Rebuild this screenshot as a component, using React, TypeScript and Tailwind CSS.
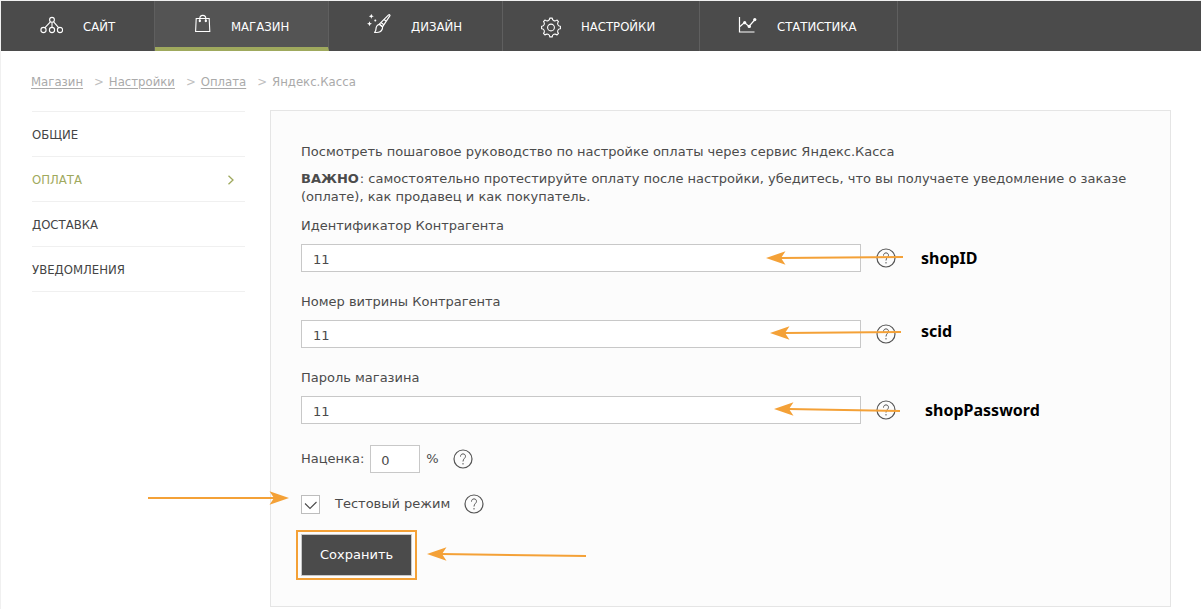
import { useState } from "react";
import type { ReactNode } from "react";

const SiteIcon = () => (
  <svg width="24" height="24" viewBox="0 0 24 24" fill="none" stroke="currentColor" strokeWidth="1.1" aria-hidden="true">
    <circle cx="13" cy="5.8" r="2.4" />
    <circle cx="4.500" cy="16" r="2.6" />
    <circle cx="13" cy="16" r="2.6" />
    <circle cx="21" cy="16" r="2.6" />
    <path d="M11.400 7.800 6 13.700M13 8.200v5.200M14.600 7.800l5 5.900" />
  </svg>
);

const BagIcon = () => (
  <svg width="16" height="24" viewBox="0 0 16 24" fill="none" stroke="currentColor" strokeWidth="1.1" aria-hidden="true">
    <path d="M1.200 4.500h13l.6 13H.6z" />
    <path d="M4.800 7.200V4.600c0-2 1-3.200 3-3.200s3 1.200 3 3.200v2.600" />
    <circle cx="4.800" cy="7" r=".6" fill="currentColor" />
    <circle cx="10.800" cy="7" r=".6" fill="currentColor" />
  </svg>
);

const BrushIcon = () => (
  <svg width="24" height="24" viewBox="0 0 24 24" fill="none" stroke="currentColor" strokeWidth="1.2" strokeLinejoin="round" aria-hidden="true">
    <path d="M12.300 10.200 21.600.900c.9-.6 1.700.1 1.200 1L15.500 12.800z" />
    <path d="m14 8.500 2.800 2.300M17 5.500l2 1.500" />
    <path d="M12.300 10.200c-2.300.9-3.300 2.700-3.300 4.600 0 1.500-.5 2.800-1.400 3.600 3.400.4 6.400-.3 7.500-2.800.4-1 .5-1.900.4-2.800z" />
    <path d="m4.300-.2.700 1.800 1.800.7-1.800.7-.7 1.800-.7-1.800-1.800-.7 1.800-.7z" fill="currentColor" stroke="none" />
    <path d="m2.500 7.200.7 1.800 1.800.7-1.800.7-.7 1.800-.7-1.800L0 9.700 1.800 9z" fill="currentColor" stroke="none" />
    <circle cx="8.300" cy="6.500" r="1" fill="currentColor" stroke="none" />
  </svg>
);

const GearIcon = () => (
  <svg width="20" height="24" viewBox="0 0 20 24" fill="none" stroke="currentColor" strokeWidth="1.100" strokeLinejoin="round" aria-hidden="true">
    <g transform="translate(10 13.500)">
      <circle r="3.400" />
      <path d="M9.400-1.200V1.200A2.700 2.700 0 0 0 7.500 5.900L5.900 7.500A2.700 2.700 0 0 0 1.200 9.400H-1.200A2.700 2.700 0 0 0-5.900 7.500L-7.500 5.900A2.700 2.700 0 0 0-9.400 1.200V-1.200A2.700 2.700 0 0 0-7.500-5.900L-5.900-7.500A2.700 2.700 0 0 0-1.200-9.400H1.200A2.700 2.700 0 0 0 5.900-7.500L7.500-5.900A2.700 2.700 0 0 0 9.400-1.200z" />
    </g>
  </svg>
);

const ChartIcon = () => (
  <svg width="19" height="24" viewBox="0 0 19 24" fill="none" stroke="currentColor" strokeWidth="1.200" aria-hidden="true">
    <path d="M1.500 3v15h15" />
    <path d="M2 12.500 6.500 8.500l4.500 4L17 5.500" />
    <circle cx="6.700" cy="8.700" r="1.600" fill="currentColor" stroke="none" />
    <circle cx="11.300" cy="12.400" r="1.700" fill="currentColor" stroke="none" />
    <circle cx="16.800" cy="5.600" r="1.600" fill="currentColor" stroke="none" />
  </svg>
);

const menu = [
  { title: "САЙТ", icon: <SiteIcon />, width: "min-w-[154px]" },
  { title: "МАГАЗИН", icon: <BagIcon />, width: "min-w-[174px]", active: true },
  { title: "ДИЗАЙН", icon: <BrushIcon />, width: "min-w-[174px]" },
  { title: "НАСТРОЙКИ", icon: <GearIcon />, width: "min-w-[197px]" },
  { title: "СТАТИСТИКА", icon: <ChartIcon />, width: "min-w-[198px]" },
];

const sections = ["ОБЩИЕ", "ОПЛАТА", "ДОСТАВКА", "УВЕДОМЛЕНИЯ"];

const Header = () => {
  return (
    <nav className="bg-[#4b4b4b] text-white">
      <ul className="flex">
        {menu.map((item) => (
          <li key={item.title} className={item.width}>
            <a
              href="#"
              className={
                item.active
                  ? "flex items-center gap-5 h-[50px] pl-10 pt-1 border-r border-b-4 border-r-[#5f5f5f] border-b-[#9fa95d] bg-[#545454]"
                  : "flex items-center gap-5 h-[50px] pl-[38px] border-r border-[#5f5f5f]"
              }
            >
              {item.icon}
              <span className="pt-px text-[13px] leading-4">{item.title}</span>
            </a>
          </li>
        ))}
      </ul>
    </nav>
  );
};

const Breadcrumbs = () => {
  return (
    <ol className="flex px-[30px] pt-[22px] text-[13px] leading-[18px] text-[#aaaaaa]">
      {["Магазин", "Настройки", "Оплата"].map((name) => (
        <li key={name}>
          <a href="#" className="underline underline-offset-2">
            {name}
          </a>
          <span className="ml-[11px] mr-[5px] text-[#c0c0c0]">&gt;</span>
        </li>
      ))}
      <li>Яндекс.Касса</li>
    </ol>
  );
};

const Sidebar = () => {
  return (
    <ul className="w-[213px] shrink-0 mt-px border-t border-[#f0f0f0] text-[13px] leading-4">
      {sections.map((name) => (
        <li key={name} className="border-b border-[#f0f0f0]">
          <a
            href="#"
            className={
              name === "ОПЛАТА"
                ? "flex items-center justify-between h-11 pt-px pr-[10px] text-[#9fa95d]"
                : "flex items-center h-11 pt-px text-[#444444]"
            }
          >
            {name}
            {name === "ОПЛАТА" && (
              <svg width="8" height="10" viewBox="0 0 8 10" fill="none" stroke="currentColor" strokeWidth="1.300" aria-hidden="true">
                <path d="m1.500.8 4.500 4.200-4.500 4.200" />
              </svg>
            )}
          </a>
        </li>
      ))}
    </ul>
  );
};

const Help = () => (
  <button type="button" aria-label="Помощь" className="shrink-0 text-[#555555]">
    <svg width="20" height="20" viewBox="0 0 20 20" fill="none" stroke="currentColor" aria-hidden="true">
      <circle cx="10" cy="10" r="9" strokeWidth="1.200" />
      <path d="M7.500 7.600c0-1.700 1-2.700 2.500-2.700s2.500 1 2.500 2.400c0 2-2.500 2.400-2.500 5.200" />
      <path d="M10 14v1.500" />
    </svg>
  </button>
);

// The tip is at the left end, `drop` is how far the tail sits below it
const Arrow = ({ length, drop, className }: { length: number; drop: number; className: string }) => (
  <svg
    width={length}
    height="14"
    viewBox={`0 0 ${length} 14`}
    className={`absolute pointer-events-none text-[#f4a137] ${className}`}
    aria-hidden="true"
  >
    <path d={`M14 7 ${length} ${7 + drop}`} stroke="currentColor" strokeWidth="2" />
    <path d="M0 7 19.500.3 15 7l4.500 6.700z" fill="currentColor" />
  </svg>
);

type FieldProps = {
  id: string;
  label: string;
  children: ReactNode;
};

const Field = ({ id, label, children }: FieldProps) => {
  const [value, setValue] = useState("11");

  return (
    <div className="mb-[21px]">
      <label htmlFor={id} className="block mb-[9px]">
        {label}
      </label>
      <div className="relative flex items-center gap-[15px]">
        <input
          id={id}
          type="text"
          value={value}
          onChange={(e) => setValue(e.target.value)}
          className="w-[560px] h-7 pl-[11px] pt-[3px] bg-white border border-[#c8c8c8] outline-none"
        />
        <Help />
        {children}
      </div>
    </div>
  );
};

const Note = ({ className, children }: { className: string; children: ReactNode }) => (
  <span className={`absolute font-['Noto_Sans'] font-bold text-base leading-5 text-black ${className}`}>{children}</span>
);

const PaymentForm = () => {
  const [markup, setMarkup] = useState("0");
  const [test, setTest] = useState(true);

  return (
    <form
      onSubmit={(e) => e.preventDefault()}
      className="grow px-[30px] pt-8 pb-[26px] bg-[#fcfcfc] border border-[#e5e5e5] font-['DejaVu_Sans',sans-serif] text-[13px] leading-[18px] text-[#4b4b4b]"
    >
      <p className="mb-[9px]">Посмотреть пошаговое руководство по настройке оплаты через сервис Яндекс.Касса</p>
      <p className="mb-[11px]">
        <b className="mr-px">ВАЖНО</b>: самостоятельно протестируйте оплату после настройки, убедитесь, что вы получаете
        уведомление о заказе (оплате), как продавец и как покупатель.
      </p>

      <Field id="shop-id" label="Идентификатор Контрагента">
        <Arrow length={137} drop={-1} className="left-[465px] top-[7px]" />
        <Note className="left-[620px] top-1">shopID</Note>
      </Field>
      <Field id="scid" label="Номер витрины Контрагента">
        <Arrow length={131} drop={-1} className="left-[469px] top-[6px]" />
        <Note className="left-[620px] top-px">scid</Note>
      </Field>
      <Field id="shop-password" label="Пароль магазина">
        <Arrow length={126} drop={2} className="left-[473px] top-[6px]" />
        <Note className="left-[624px] top-1">shopPassword</Note>
      </Field>

      <div className="flex items-center">
        <label htmlFor="markup">Наценка:</label>
        <input
          id="markup"
          type="text"
          value={markup}
          onChange={(e) => setMarkup(e.target.value)}
          className="w-[50px] h-7 ml-[6px] mr-[6px] pl-[10px] pt-[3px] bg-white border border-[#c8c8c8] outline-none"
        />
        <span className="mr-[14px]">%</span>
        <Help />
      </div>

      <div className="relative flex items-center mt-[21px]">
        <span className="relative flex text-[#4b4b4b]">
          <input
            id="test-mode"
            type="checkbox"
            checked={test}
            onChange={(e) => setTest(e.target.checked)}
            className="appearance-none size-[19px] bg-white border border-[#bdbdbd]"
          />
          {test && (
            <svg width="19" height="19" viewBox="0 0 19 19" fill="none" stroke="currentColor" className="absolute inset-0 pointer-events-none" aria-hidden="true">
              <path d="m4 8.500 5 5 6.500-6.500" strokeWidth="1.100" />
            </svg>
          )}
        </span>
        <label htmlFor="test-mode" className="ml-[15px] mr-[14px]">
          Тестовый режим
        </label>
        <Help />
        <Arrow length={141} drop={0} className="right-full mr-3 -top-[3px] rotate-180" />
      </div>

      <div className="relative flex mt-4 -ml-[5px]">
        <div className="px-[3px] py-[2px] border-2 border-[#f4a137]">
          <button type="submit" className="block h-[42px] px-[18px] bg-[#4b4b4b] border border-[#c8c8c8] text-white">
            Сохранить
          </button>
        </div>
        <Arrow length={159} drop={2} className="left-[131px] top-[17px]" />
      </div>
    </form>
  );
};

const App = () => {
  return (
    <div className="min-h-screen bg-white border-t border-l border-[#f0f0f0] font-['DejaVu_Sans_Condensed','Noto_Sans',sans-serif]">
      <Header />
      <Breadcrumbs />
      <main className="flex items-start gap-[25px] pl-[31px] pr-[30px] pt-[19px]">
        <Sidebar />
        <PaymentForm />
      </main>
    </div>
  );
};

export default App;
